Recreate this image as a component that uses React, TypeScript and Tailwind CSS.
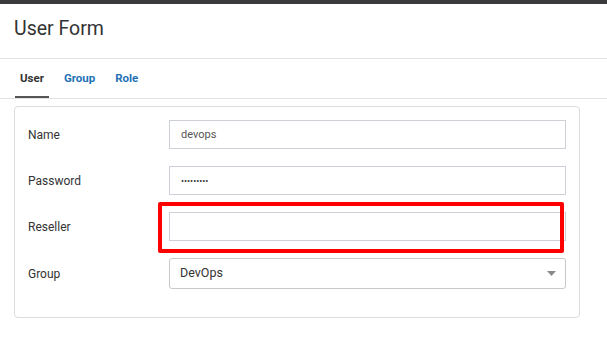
export default function App() {
  const rows = [
    { label: 'Name', value: 'devops' },
    { label: 'Password', value: 'secret123', password: true },
    { label: 'Reseller', value: '', marked: true },
  ];

  return (
    <div className="w-[607px] h-[342px] bg-white overflow-hidden font-['Roboto',sans-serif] text-[#333]">
      <div className="h-[4px] bg-[#3a3a3c]" />

      <div className="h-[55px] border-b border-[#e3e3e3] px-[14px] pt-[13px]">
        <h1 className="text-[19.5px] leading-[24px] font-normal text-[#333]">User Form</h1>
      </div>

      <div className="h-[40px] border-b border-[#e3e3e3] flex gap-[10px] pl-[15px]">
        <a className="h-[39px] pt-[11px] px-[5px] text-[11.5px] leading-[16px] font-bold text-[#333] border-b-[2px] border-[#555]">
          User
        </a>
        <a className="h-[39px] pt-[11px] px-[5px] text-[11.5px] leading-[16px] font-bold text-[#1f72b6]">
          Group
        </a>
        <a className="h-[39px] pt-[11px] px-[5px] text-[11.5px] leading-[16px] font-bold text-[#1f72b6]">
          Role
        </a>
      </div>

      <div className="ml-[14px] mt-[7px] w-[566px] border border-[#dcdcdc] rounded-[4px] pt-[13px] pb-[28px] px-[13px] flex flex-col gap-[17px]">
        {rows.map((r) => (
          <div key={r.label} className="flex items-center">
            <label className="w-[141px] text-[12px] text-[#333]">{r.label}</label>
            <div className="relative flex-1">
              <input
                readOnly
                type={r.password ? 'password' : 'text'}
                value={r.value}
                className={`w-full h-[29px] border border-[#cdd1d7] px-[11px] outline-none ${
                  r.password ? 'text-[9px] text-[#333]' : 'text-[11px] text-[#555]'
                }`}
              />
              {r.marked && (
                <div className="absolute -left-[11px] -top-[10px] right-[2px] -bottom-[12px] border-[4px] border-[#ff0000] rounded-[2px] pointer-events-none" />
              )}
            </div>
          </div>
        ))}

        <div className="flex items-center">
          <label className="w-[141px] text-[12px] text-[#333]">Group</label>
          <div className="flex-1 h-[31px] border border-[#c9c9c9] rounded-[3px] flex items-center justify-between pl-[10px] pr-[9px]">
            <span className="text-[12.5px] text-[#333]">DevOps</span>
            <svg width="9" height="5" viewBox="0 0 9 5">
              <path d="M0 0 L9 0 L4.5 5 Z" fill="#8a8a8a" />
            </svg>
          </div>
        </div>
      </div>
    </div>
  );
}
